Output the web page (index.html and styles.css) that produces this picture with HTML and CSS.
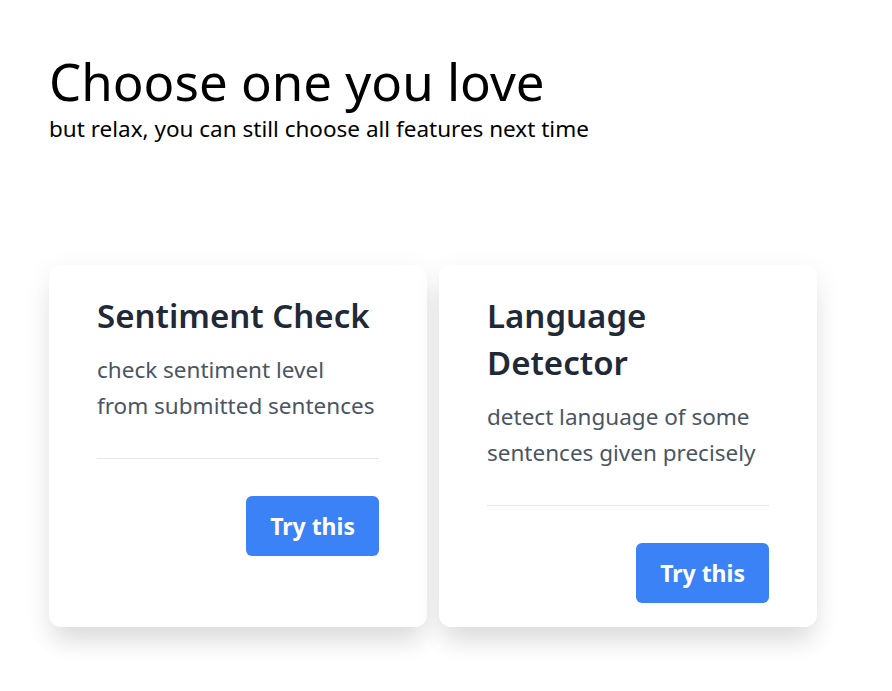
FILE: index.html
```html
<!DOCTYPE html>
<html lang="en">
<head>
<meta charset="utf-8">
<title>Choose one you love</title>
<link rel="stylesheet" href="styles.css">
</head>
<body>
<main class="page">
  <header class="intro">
    <h1 class="intro-title">Choose one you love</h1>
    <p class="intro-sub">but relax, you can still choose all features next time</p>
  </header>
  <section class="cards">
    <article class="card">
      <h2 class="card-title">Sentiment Check</h2>
      <p class="card-desc">check sentiment level from submitted sentences</p>
      <hr class="card-rule">
      <div class="card-actions"><button class="btn" type="button">Try this</button></div>
    </article>
    <article class="card">
      <h2 class="card-title">Language Detector</h2>
      <p class="card-desc">detect language of some sentences given precisely</p>
      <hr class="card-rule">
      <div class="card-actions"><button class="btn" type="button">Try this</button></div>
    </article>
  </section>
</main>
</body>
</html>
```
FILE: styles.css
```css
* { box-sizing: border-box; }
html, body { margin: 0; padding: 0; background: #fff; }
body { font-family: "Noto Sans", "Open Sans", sans-serif; color: #000; }
.page { padding: 50px 0 60px 49px; }
.intro-title { margin: 0; font-size: 51px; line-height: 62px; font-weight: 400; color: #000; }
.intro-sub { margin: 2px 0 0; font-size: 22.5px; line-height: 30px; color: #000; }
.cards { display: flex; gap: 12px; margin-top: 121px; align-items: stretch; }
.card {
  width: 378px; background: #fff; border-radius: 12px;
  padding: 27px 48px 24px;
  box-shadow: 0 20px 25px -5px rgba(0,0,0,.09), 0 8px 30px rgba(0,0,0,.07);
  display: flex; flex-direction: column;
}
.card-title { margin: 0; font-size: 33px; line-height: 47px; font-weight: 600; color: #1f2937; }
.card-desc { margin: 13px 0 0; font-size: 22.5px; line-height: 36px; color: #4b5563; }
.card-rule { margin: 34px 0 0; border: 0; border-top: 1px solid #e5e7eb; height: 0; }
.card-actions { display: flex; justify-content: flex-end; margin-top: 37px; }
.btn {
  font-family: inherit; height: 60px; padding: 0 24px; min-width: 132px;
  background: #3b82f6; color: #fff; border: 0; border-radius: 6px;
  font-size: 23px; font-weight: 700; cursor: pointer;
}
```
